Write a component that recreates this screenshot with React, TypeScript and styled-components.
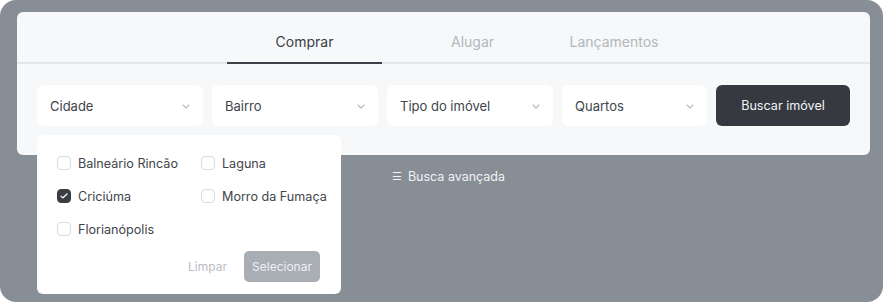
import React, { useState } from "react";
import styled, { createGlobalStyle } from "styled-components";

const GlobalStyle = createGlobalStyle`
  html, body {
    margin: 0;
    padding: 0;
    background: #ffffff;
  }
  body {
    font-family: Inter, "Liberation Sans", sans-serif;
    -webkit-font-smoothing: antialiased;
  }
`;

const cities = [
  { name: "Balneário Rincão", checked: false },
  { name: "Laguna", checked: false },
  { name: "Criciúma", checked: true },
  { name: "Morro da Fumaça", checked: false },
  { name: "Florianópolis", checked: false },
];

const tabs = [
  { label: "Comprar", width: 155 },
  { label: "Alugar", width: 181 },
  { label: "Lançamentos", width: 102 },
];

const Chevron = () => (
  <svg width="8" height="5" viewBox="0 0 8 5" fill="none">
    <path d="M1 1l3 3 3-3" stroke="#b7bbc1" strokeWidth="1.1" strokeLinecap="round" strokeLinejoin="round" />
  </svg>
);

const Check = () => (
  <svg width="8" height="6" viewBox="0 0 8 6" fill="none">
    <path d="M1 3.1l1.9 1.8L7 1" stroke="#ffffff" strokeWidth="1.3" strokeLinecap="round" strokeLinejoin="round" />
  </svg>
);

const Select = ({ label, width }: { label: string; width: number }) => (
  <SelectBox $w={width}>
    <span>{label}</span>
    <Chevron />
  </SelectBox>
);

export default function App() {
  const [active, setActive] = useState(0);
  const [selected, setSelected] = useState(cities.map((c) => c.checked));

  const toggle = (idx: number) =>
    setSelected((prev) => prev.map((v, i) => (i === idx ? !v : v)));

  return (
    <>
      <GlobalStyle />
      <Frame>
        <Card>
          <TabBar>
            {tabs.map((tab, idx) => (
              <Tab
                key={tab.label}
                $w={tab.width}
                $active={idx === active}
                onClick={() => setActive(idx)}
              >
                {tab.label}
              </Tab>
            ))}
          </TabBar>
          <FilterRow>
            <SelectWrap>
              <Select label="Cidade" width={166} />
              <Dropdown>
                <OptionGrid>
                  {cities.map((city, idx) => (
                    <Option key={city.name} onClick={() => toggle(idx)}>
                      <Box $checked={selected[idx]}>{selected[idx] && <Check />}</Box>
                      {city.name}
                    </Option>
                  ))}
                </OptionGrid>
                <DropdownActions>
                  <ClearButton>Limpar</ClearButton>
                  <ApplyButton>Selecionar</ApplyButton>
                </DropdownActions>
              </Dropdown>
            </SelectWrap>
            <Select label="Bairro" width={166} />
            <Select label="Tipo do imóvel" width={166} />
            <Select label="Quartos" width={145} />
            <SearchButton>Buscar imóvel</SearchButton>
          </FilterRow>
        </Card>
        <Advanced>
          <MenuGlyph>☰</MenuGlyph>
          Busca avançada
        </Advanced>
      </Frame>
    </>
  );
}

const Frame = styled.div`
  width: 883px;
  height: 302px;
  box-sizing: border-box;
  background: #878e96;
  border-radius: 16px;
  padding: 12px 13px 0 17px;
  overflow: hidden;
`;

const Card = styled.div`
  background: #f7f8fa;
  border-radius: 6px;
  padding-bottom: 29px;
`;

const TabBar = styled.div`
  display: flex;
  padding-left: 210px;
  border-bottom: 2px solid #e4e6e9;
`;

const Tab = styled.div<{ $w: number; $active: boolean }>`
  width: ${(p) => p.$w}px;
  text-align: center;
  padding: 21px 0 12px;
  margin-bottom: -2px;
  font-size: 14px;
  line-height: 17px;
  color: ${(p) => (p.$active ? "#3a3e44" : "#b2b7bd")};
  border-bottom: 2px solid ${(p) => (p.$active ? "#3d4147" : "transparent")};
  cursor: pointer;
`;

const FilterRow = styled.div`
  display: flex;
  gap: 9px;
  padding: 21px 20px 0;
`;

const SelectWrap = styled.div`
  position: relative;
`;

const SelectBox = styled.div<{ $w: number }>`
  width: ${(p) => p.$w}px;
  height: 41px;
  box-sizing: border-box;
  background: #ffffff;
  border-radius: 6px;
  display: flex;
  align-items: center;
  justify-content: space-between;
  padding: 0 13px 0 13px;
  font-size: 13px;
  color: #41454b;
  svg {
    margin-top: 1px;
  }
`;

const SearchButton = styled.button`
  width: 134px;
  height: 41px;
  border: none;
  border-radius: 6px;
  background: #363a40;
  color: #f2f3f5;
  font-family: Inter, "Liberation Sans", sans-serif;
  font-size: 12.6px;
  cursor: pointer;
`;

const Dropdown = styled.div`
  position: absolute;
  top: calc(100% + 9px);
  left: 0;
  width: 304px;
  box-sizing: border-box;
  background: #ffffff;
  border-radius: 6px;
  padding: 19px 21px 12px 20px;
  z-index: 2;
`;

const OptionGrid = styled.div`
  display: grid;
  grid-template-columns: 144px 1fr;
  row-gap: 15px;
`;

const Option = styled.label`
  display: flex;
  align-items: center;
  gap: 7px;
  height: 18px;
  font-size: 12.6px;
  color: #41454b;
  white-space: nowrap;
  cursor: pointer;
`;

const Box = styled.span<{ $checked: boolean }>`
  width: 14px;
  height: 14px;
  box-sizing: border-box;
  border-radius: 4px;
  border: 1px solid ${(p) => (p.$checked ? "#3a3e44" : "#d8dbdf")};
  background: ${(p) => (p.$checked ? "#3a3e44" : "#ffffff")};
  display: flex;
  align-items: center;
  justify-content: center;
`;

const DropdownActions = styled.div`
  display: flex;
  justify-content: flex-end;
  align-items: center;
  gap: 17px;
  margin-top: 13px;
`;

const ClearButton = styled.button`
  border: none;
  background: none;
  padding: 0;
  font-family: Inter, "Liberation Sans", sans-serif;
  font-size: 12px;
  color: #b9bdc3;
`;

const ApplyButton = styled.button`
  width: 76px;
  height: 31px;
  border: none;
  border-radius: 5px;
  background: #a9aeb4;
  color: #eef0f2;
  font-family: Inter, "Liberation Sans", sans-serif;
  font-size: 12px;
`;

const Advanced = styled.div`
  display: flex;
  justify-content: center;
  align-items: center;
  gap: 6px;
  margin-top: 14px;
  padding-left: 10px;
  font-size: 12.5px;
  color: #f1f3f5;
`;

const MenuGlyph = styled.span`
  font-size: 11px;
  line-height: 1;
`;
